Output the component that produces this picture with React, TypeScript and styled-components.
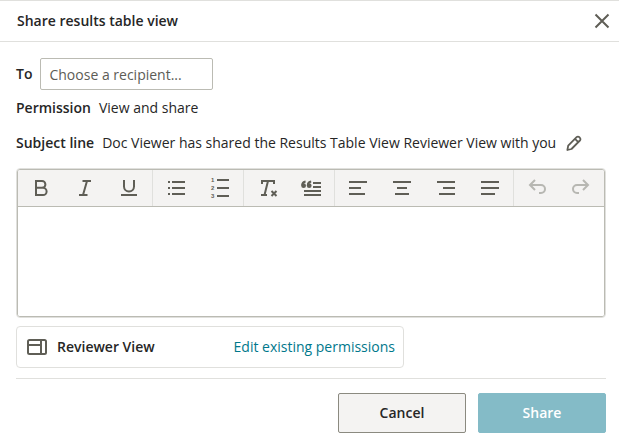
import React from "react";
import styled, { createGlobalStyle } from "styled-components";

const ink = "#262626";
const icon = "#5f5e56";
const rule = "#e0e0dd";
const edge = "#bbbbb3";

const GlobalStyle = createGlobalStyle`
  *, *::before, *::after { box-sizing: border-box; }
  body { margin: 0; background: #fff; }
  body, button, input, textarea {
    font-family: "Open Sans", "Noto Sans", sans-serif;
    font-size: 14px;
    line-height: 20px;
    color: ${ink};
  }
  svg { display: block; fill: none; stroke: currentColor; stroke-width: 2; }
`;

const Dialog = styled.form`
  margin: 0;
  border-top: 1px solid ${rule};
`;

const Header = styled.header`
  display: flex;
  align-items: center;
  justify-content: space-between;
  height: 41px;
  padding: 0 5px 0 17px;
  border-bottom: 1px solid ${rule};
`;

const Title = styled.h2`
  margin: 0;
  font-size: 14px;
  font-weight: 600;
`;

const IconButton = styled.button`
  display: flex;
  padding: 0;
  border: 0;
  background: none;
  color: ${icon};
  cursor: pointer;
`;

const Body = styled.div`
  padding: 16px 13px 0 16px;
`;

const Field = styled.div<{ $height: number }>`
  display: flex;
  align-items: center;
  gap: 8px;
  height: ${(p) => p.$height}px;
  white-space: nowrap;
`;

const Label = styled.label`
  font-weight: 600;
`;

const Name = styled.span`
  font-weight: 600;
`;

const RecipientInput = styled.input`
  width: 173px;
  height: 32px;
  padding: 0 8px;
  border: 1px solid ${edge};
  border-radius: 2px;
  background: #fff;
  outline: none;
  &::placeholder { color: #5c5c56; opacity: 1; }
`;

const Editor = styled.div`
  margin-top: 8px;
  border: 1px solid ${rule};
  border-radius: 4px;
`;

const EditorFrame = styled.div`
  border: 1px solid ${edge};
  border-radius: 3px;
  overflow: hidden;
`;

const Toolbar = styled.div`
  display: flex;
  height: 37px;
  border-bottom: 1px solid ${edge};
  background: #f4f3f2;
`;

const Group = styled.div`
  display: flex;
  padding: 0 1px;
  & + & { border-left: 1px solid ${rule}; }
`;

const Tool = styled.button`
  display: flex;
  align-items: center;
  justify-content: center;
  width: 44px;
  padding: 0;
  border: 0;
  background: none;
  color: ${icon};
  cursor: pointer;
  &:disabled { color: #b7b7b2; cursor: default; }
`;

const Digit = styled.text`
  font: 700 6px "Liberation Sans", sans-serif;
  fill: currentColor;
  stroke: none;
`;

const Message = styled.textarea`
  display: block;
  width: 100%;
  height: 109px;
  padding: 8px;
  border: 0;
  outline: none;
  resize: none;
`;

const ViewCard = styled.div`
  display: flex;
  align-items: center;
  gap: 8px;
  width: 388px;
  max-width: 100%;
  height: 42px;
  margin-top: 8px;
  padding: 0 8px;
  border: 1px solid ${rule};
  border-radius: 4px;
  & > svg { color: ${icon}; }
`;

const Link = styled.a`
  margin-left: auto;
  color: #00788c;
  text-decoration: none;
`;

const Footer = styled.footer`
  display: flex;
  justify-content: flex-end;
  gap: 12px;
  margin-top: 10px;
  padding: 14px 0 12px;
  border-top: 1px solid ${rule};
`;

const Action = styled.button<{ $primary?: boolean }>`
  width: 128px;
  height: 40px;
  padding: 0;
  border: 1px solid ${(p) => (p.$primary ? "#84bbc7" : "#8b8a80")};
  border-radius: 2px;
  background: ${(p) => (p.$primary ? "#84bbc7" : "#f4f3f2")};
  color: ${(p) => (p.$primary ? "#fff" : ink)};
  font-weight: 600;
`;

type ToolSpec = { label: string; art: React.ReactNode; disabled?: boolean };

const groups: ToolSpec[][] = [
  [
    { label: "Bold", art: <path d="M7 5h6a3.4 3.4 0 0 1 0 6.8H7zM7 11.8h7a3.6 3.6 0 0 1 0 7.2H7z" /> },
    { label: "Italic", art: <path d="M9.5 5H18M6 19h8.5M14 5l-4 14" /> },
    { label: "Underline", art: <path d="M7 4v6.5a5 5 0 0 0 10 0V4M4 19h16" /> },
  ],
  [
    { label: "Bulleted list", art: <path d="M4 6h2M4 12h2M4 18h2M8 6h13M8 12h13M8 18h13" /> },
    {
      label: "Numbered list",
      art: (
        <>
          <Digit x="3" y="6">1</Digit>
          <Digit x="3" y="14">2</Digit>
          <Digit x="3" y="22">3</Digit>
          <path d="M9 4h12M9 12h12M9 20h12" />
        </>
      ),
    },
  ],
  [
    {
      label: "Clear formatting",
      art: (
        <>
          <path d="M7 8V5h12v3M6 19h6M13 5L9.5 19" />
          <path d="M16.5 15l5 5M21.5 15l-5 5" />
        </>
      ),
    },
    {
      label: "Block quote",
      art: (
        <>
          <path d="M14 7h8M14 11h8M5 15h17M5 19h17" />
          <path d="M6.6 5.6C4.2 6 3.2 7.6 3.2 9.6M12.2 5.6C9.8 6 8.8 7.6 8.8 9.6" />
          <circle cx="4.6" cy="9.7" r="2.4" fill="currentColor" stroke="none" />
          <circle cx="10.2" cy="9.7" r="2.4" fill="currentColor" stroke="none" />
        </>
      ),
    },
  ],
  [
    { label: "Align left", art: <path d="M3 6h18M3 12h12M3 18h16" /> },
    { label: "Align center", art: <path d="M3 6h18M7 12h10M5 18h14" /> },
    { label: "Align right", art: <path d="M3 6h18M9 12h12M5 18h16" /> },
    { label: "Justify", art: <path d="M3 6h18M3 12h18M3 18h14" /> },
  ],
  [
    { label: "Undo", disabled: true, art: <path d="M10 4L5 9l5 5M5 9h11a4 4 0 0 1 0 8h-2" /> },
    { label: "Redo", disabled: true, art: <path d="M14 4l5 5-5 5M19 9H8a4 4 0 0 0 0 8h2" /> },
  ],
];

export default function App() {
  return (
    <Dialog onSubmit={(e) => e.preventDefault()}>
      <GlobalStyle />
      <Header>
        <Title>Share results table view</Title>
        <IconButton type="button" aria-label="Close">
          <svg width="24" height="24"><path d="M5.5 5.5l13 13M18.5 5.5l-13 13" /></svg>
        </IconButton>
      </Header>
      <Body>
        <Field $height={32}>
          <Label htmlFor="recipient">To</Label>
          <RecipientInput id="recipient" placeholder="Choose a recipient..." />
        </Field>
        <Field $height={36}>
          <Name>Permission</Name>
          <span>View and share</span>
        </Field>
        <Field $height={34}>
          <Name>Subject line</Name>
          <span>Doc Viewer has shared the Results Table View Reviewer View with you</span>
          <IconButton type="button" aria-label="Edit subject line">
            <svg width="20" height="20">
              <path
                d="M3.4 17l.8-4.4L12.6 4.2a1.9 1.9 0 0 1 2.7 0l.6.6a1.9 1.9 0 0 1 0 2.7L7.5 16zM11 5.8l3.3 3.3"
                strokeWidth="1.8"
                strokeLinejoin="round"
              />
            </svg>
          </IconButton>
        </Field>
        <Editor>
          <EditorFrame>
            <Toolbar role="toolbar" aria-label="Formatting">
              {groups.map((tools, i) => (
                <Group key={i}>
                  {tools.map((t) => (
                    <Tool key={t.label} type="button" aria-label={t.label} disabled={t.disabled}>
                      <svg width="24" height="24">{t.art}</svg>
                    </Tool>
                  ))}
                </Group>
              ))}
            </Toolbar>
            <Message aria-label="Message" />
          </EditorFrame>
        </Editor>
        <ViewCard>
          <svg width="24" height="24" aria-hidden="true">
            <rect x="3" y="5" width="18" height="14" rx="1.5" />
            <path d="M16 5v14M3 10h13" />
          </svg>
          <Name>Reviewer View</Name>
          <Link href="#permissions">Edit existing permissions</Link>
        </ViewCard>
        <Footer>
          <Action type="button">Cancel</Action>
          <Action type="submit" $primary>Share</Action>
        </Footer>
      </Body>
    </Dialog>
  );
}
